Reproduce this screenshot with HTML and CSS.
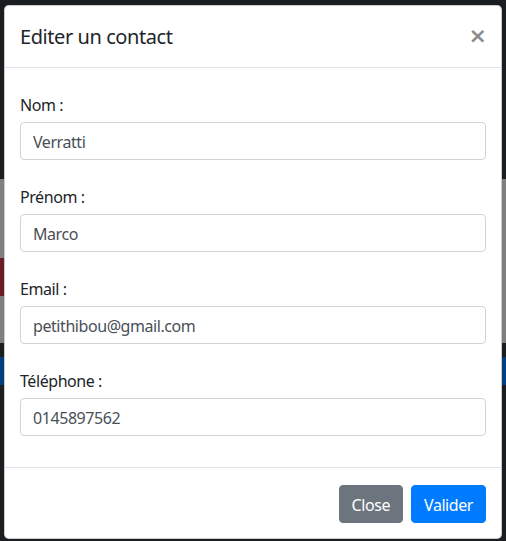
FILE: index.html
```html
<!DOCTYPE html>
<html lang="fr">
<head>
<meta charset="utf-8">
<title>Editer un contact</title>
<link rel="stylesheet" href="styles.css">
</head>
<body>
<div class="backdrop">
  <div class="modal">
    <div class="modal-header">
      <h5 class="modal-title">Editer un contact</h5>
      <button type="button" class="close" aria-label="Close">&times;</button>
    </div>
    <div class="modal-body">
      <div class="form-group">
        <label class="label">Nom :</label>
        <input class="form-control" type="text" value="Verratti">
      </div>
      <div class="form-group">
        <label class="label">Prénom :</label>
        <input class="form-control" type="text" value="Marco">
      </div>
      <div class="form-group">
        <label class="label">Email :</label>
        <input class="form-control" type="text" value="petithibou@gmail.com">
      </div>
      <div class="form-group">
        <label class="label">Téléphone :</label>
        <input class="form-control" type="text" value="0145897562">
      </div>
    </div>
    <div class="modal-footer">
      <button type="button" class="btn btn-secondary">Close</button>
      <button type="button" class="btn btn-primary">Valider</button>
    </div>
  </div>
</div>
</body>
</html>
```
FILE: styles.css
```css
* { box-sizing: border-box; }
html, body { margin: 0; padding: 0; }
body {
  width: 506px;
  height: 541px;
  overflow: hidden;
  font-family: "Noto Sans", "Open Sans", sans-serif;
  letter-spacing: -0.027em;
  color: #212529;
  background-color: #1b1e21;
  background-image:
    linear-gradient(to bottom, transparent 258px, #6e1b23 258px, #6e1b23 296px, transparent 296px),
    linear-gradient(to bottom, #1b1e21 0, #1b1e21 179px, #7f7f7f 179px, #7f7f7f 343px, #1b1e21 343px, #1b1e21 357px, #003e80 357px, #003e80 385px, #1b1e21 385px);
  background-size: 4px 100%, 100% 100%;
  background-repeat: no-repeat;
}
.backdrop {
  padding: 5px 4px 2px 4px;
}
.modal {
  width: 498px;
  height: 534px;
  background: #fff;
  border: 1px solid rgba(0,0,0,.2);
  border-radius: 4.8px;
  display: flex;
  flex-direction: column;
  overflow: hidden;
}
.modal-header {
  display: flex;
  align-items: flex-start;
  justify-content: space-between;
  padding: 16px 16px 15px 15px;
  border-bottom: 1px solid #dee2e6;
}
.modal-title {
  margin: 0;
  font-size: 20px;
  font-weight: 400;
  line-height: 30px;
}
.close {
  background: transparent;
  border: 0;
  padding: 0;
  margin: 0 -2px 0 0;
  font-family: "DejaVu Sans", sans-serif;
  font-size: 22px;
  font-weight: 700;
  line-height: 28px;
  color: #000;
  opacity: .45;
  cursor: pointer;
}
.modal-body {
  padding: 24px 15px 31px 15px;
  display: flex;
  flex-direction: column;
  gap: 24px;
}
.form-group {
  display: flex;
  flex-direction: column;
}
.label {
  font-size: 16px;
  line-height: 24px;
  padding-top: 1px;
  height: 24px;
  margin-bottom: 6px;
}
.form-control {
  display: block;
  width: 100%;
  height: 38px;
  padding: 7px 12px 5px 12px;
  font-family: inherit;
  letter-spacing: inherit;
  font-size: 16px;
  line-height: 24px;
  color: #495057;
  background: #fff;
  border: 1px solid #ced4da;
  border-radius: 4px;
}
.modal-footer {
  flex: 1;
  display: flex;
  justify-content: flex-end;
  align-items: flex-start;
  gap: 8px;
  padding: 17px 15px 0 16px;
  border-top: 1px solid #dee2e6;
}
.btn {
  height: 38px;
  padding: 7px 12px 5px 12px;
  font-family: inherit;
  letter-spacing: inherit;
  font-size: 16px;
  line-height: 24px;
  color: #fff;
  border: 1px solid transparent;
  border-radius: 4px;
}
.btn-secondary { background: #6c757d; border-color: #6c757d; }
.btn-primary { background: #007bff; border-color: #007bff; }
```
